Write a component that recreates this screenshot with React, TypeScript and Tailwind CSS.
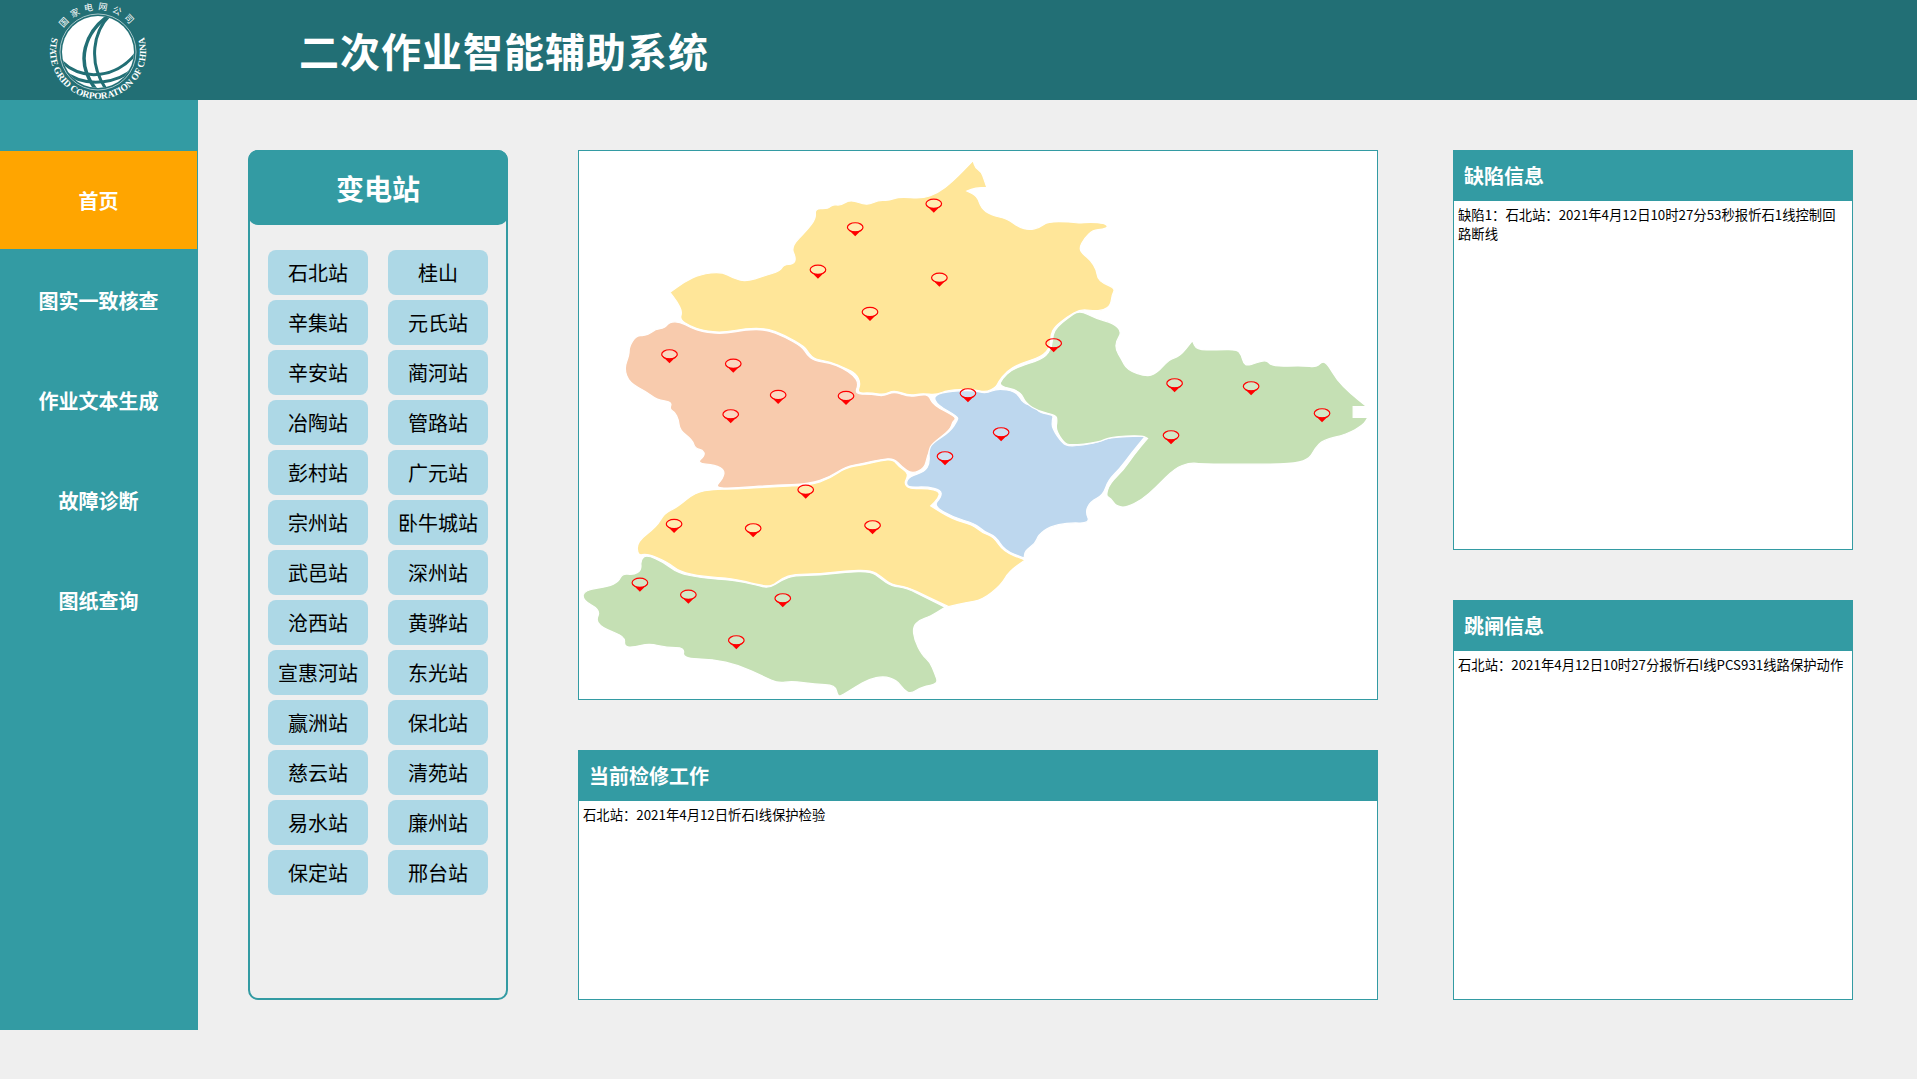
const NAV = ['首页', '图实一致核查', '作业文本生成', '故障诊断', '图纸查询'];

const STATIONS = [
  '石北站', '桂山', '辛集站', '元氏站', '辛安站', '蔺河站', '冶陶站', '管路站', '彭村站', '广元站',
  '宗州站', '卧牛城站', '武邑站', '深州站', '沧西站', '黄骅站', '宣惠河站', '东光站', '赢洲站', '保北站',
  '慈云站', '清苑站', '易水站', '廉州站', '保定站', '邢台站',
];

// Outlines are traced in a stretched trace space: x = (px - 570) * 1.96, y = (py - 140) * 3
// A point listed twice stays a sharp corner
const REGIONS: { fill: string; pts: number[] }[] = [
  {
    fill: '#ffe699',
    pts: [790,62,790,62,795,85,806,95,812,120,817,143,817,143,795,143,778,153,778,153,798,168,806,205,825,225,858,237,880,262,900,270,920,263,936,245,980,245,995,250,1020,246,1048,250,1055,260,1045,268,1025,270,1008,295,998,325,1005,342,1020,360,1032,390,1034,415,1045,430,1069,445,1062,465,1060,495,1045,512,1025,512,1000,508,975,530,950,560,942,585,942,620,925,650,880,672,855,695,840,725,835,742,815,757,790,748,740,750,718,765,690,760,665,767,635,750,615,765,590,758,562,760,570,730,560,700,540,685,510,665,480,658,468,640,460,620,420,585,385,565,345,565,300,578,260,572,235,558,215,538,220,515,210,485,196,457,196,457,225,425,255,403,297,395,320,415,345,425,380,408,412,393,418,375,438,372,443,355,433,320,465,270,482,235,480,205,505,207,515,193,530,197,550,178,582,197,605,180,625,182,645,170,690,176,720,160,750,125],
  },
  {
    fill: '#f8cbad',
    pts: [195,546,215,545,235,562,260,576,300,582,345,569,385,569,420,590,455,620,465,645,478,662,510,669,535,685,555,705,566,730,558,763,590,762,615,769,635,754,665,771,690,764,703,766,712,795,755,830,755,840,750,845,745,870,710,910,700,950,695,985,670,1002,650,980,635,955,610,958,575,970,540,980,510,1010,470,1032,400,1035,320,1045,283,1043,300,1015,303,990,285,975,248,970,265,945,260,930,245,925,240,900,215,870,213,840,205,815,195,808,200,785,170,780,150,755,116,728,106,685,116,645,116,620,130,586,150,588,168,567,185,565],
  },
  {
    fill: '#ffe699',
    pts: [245,1057,283,1047,320,1048,400,1040,470,1036,510,1015,540,983,575,974,610,962,633,958,645,980,660,995,662,1010,655,1030,665,1047,700,1045,725,1055,722,1075,707,1098,707,1098,750,1138,790,1155,810,1180,830,1190,850,1235,892,1260,892,1260,860,1295,845,1335,808,1380,775,1388,742,1400,742,1400,700,1370,660,1340,630,1335,610,1310,590,1290,540,1292,490,1302,440,1302,415,1315,395,1340,370,1335,320,1315,260,1310,215,1295,190,1265,150,1240,133,1248,131,1205,170,1160,185,1120,210,1102],
  },
  {
    fill: '#c5e0b4',
    pts: [150,1244,185,1268,210,1298,260,1315,320,1320,365,1335,390,1345,415,1320,440,1306,490,1306,540,1296,590,1294,608,1315,630,1338,660,1344,700,1375,735,1402,735,1402,705,1430,685,1440,672,1460,675,1500,690,1545,705,1565,715,1600,722,1632,690,1640,668,1662,655,1650,640,1620,615,1608,585,1618,560,1640,535,1665,525,1670,520,1635,480,1633,435,1623,408,1630,380,1610,330,1575,280,1558,220,1555,225,1523,190,1523,155,1510,125,1522,106,1520,108,1490,70,1468,50,1445,60,1410,24,1380,28,1350,75,1340,95,1325,103,1300,125,1305,140,1290,138,1260],
  },
  {
    fill: '#bdd7ee',
    pts: [712,768,735,755,790,750,815,761,838,745,875,755,888,790,912,800,920,818,948,825,945,840,945,865,965,910,980,920,1030,910,1055,892,1128,888,1128,888,1100,940,1078,985,1055,1020,1045,1065,1020,1085,1010,1115,1020,1150,975,1148,940,1160,918,1185,912,1210,892,1232,890,1254,890,1254,852,1232,835,1190,812,1175,793,1150,752,1133,712,1098,728,1070,727,1050,700,1040,665,1042,658,1030,665,1010,695,995,705,970,703,930,710,910,745,875,760,840,760,830,720,795],
  },
  {
    fill: '#c5e0b4',
    pts: [998,510,1030,535,1065,550,1082,575,1070,605,1070,630,1080,655,1092,690,1130,710,1150,700,1175,657,1195,650,1220,602,1220,602,1228,630,1267,630,1307,628,1316,645,1320,670,1329,678,1365,657,1375,680,1437,677,1463,682,1475,663,1486,675,1503,720,1529,760,1562,800,1562,800,1535,800,1535,800,1535,832,1535,832,1564,832,1564,832,1555,855,1522,883,1476,900,1460,925,1450,955,1424,970,1359,973,1241,972,1215,968,1185,985,1150,1040,1120,1080,1090,1103,1070,1098,1060,1075,1050,1068,1058,1030,1085,990,1105,945,1132,895,1132,895,1120,886,1060,890,1035,908,980,916,968,908,952,870,955,840,952,825,920,815,893,790,882,752,840,738,848,715,865,690,890,675,930,655,945,620,946,585,955,560,975,535],
  },
];

// Marker tips, same trace space
const PINS = [
  713,216, 559,287, 486,414, 724,438, 588,541, 948,635, 195,668, 320,696, 408,790, 541,793, 780,785,
  315,848, 1185,755, 1335,764, 1474,845, 845,902, 735,974, 1178,911, 462,1074, 204,1177, 359,1190,
  593,1181, 137,1353, 232,1389, 417,1400, 326,1526,
];

// Runs a closed, softly rounded path through the traced points
function outline(pts: number[]) {
  const n = pts.length / 2;
  const mid = (i: number) => {
    const a = i % n;
    const b = (i + 1) % n;
    return `${(pts[a * 2] + pts[b * 2]) / 2} ${(pts[a * 2 + 1] + pts[b * 2 + 1]) / 2}`;
  };
  let d = `M${mid(n - 1)}`;
  for (let i = 0; i < n; i++) d += ` Q${pts[i * 2]} ${pts[i * 2 + 1]} ${mid(i)}`;
  return d + ' Z';
}

function MapView() {
  const pins = [];
  for (let i = 0; i < PINS.length; i += 2) {
    pins.push({ x: PINS[i] / 1.96 - 9, y: PINS[i + 1] / 3 - 10.3 });
  }
  return (
    <svg width="798" height="548" viewBox="0 0 798 548" className="block">
      <g transform="translate(-9 -11) scale(0.5102 0.33333)">
        {REGIONS.map((r, i) => (
          <path key={i} d={outline(r.pts)} fill={r.fill} stroke="#ffffff" strokeWidth="1.2" vectorEffect="non-scaling-stroke" />
        ))}
      </g>
      {pins.map((p, i) => (
        <g key={i} transform={`translate(${p.x} ${p.y})`}>
          <path d="M-5.8 -5.8 Q0 -3.8 5.8 -5.8 L0 0 Z" fill="#ff0000" />
          <path d="M-7.4 -7.8 L-5 -5.2 M7.4 -7.8 L5 -5.2" fill="none" stroke="#ff0000" strokeWidth="1" />
          <ellipse cx="0" cy="-9" rx="7.8" ry="4.6" fill="#ffffff" fillOpacity="0.25" stroke="#ff0000" strokeWidth="1.2" />
        </g>
      ))}
    </svg>
  );
}

function Logo() {
  return (
    <svg width="100" height="100" viewBox="0 0 100 100" className="shrink-0">
      <defs>
        <path id="logo-cn" d="M 10 39 A 42 42 0 0 1 90 39" />
        <path id="logo-en" d="M 7.6 28.5 A 48 48 0 1 0 92.4 28.5" />
        <clipPath id="logo-globe">
          <circle cx="50" cy="52" r="36" />
        </clipPath>
      </defs>
      <circle cx="50" cy="52" r="36" fill="#ffffff" />
      <g clipPath="url(#logo-globe)" fill="none" stroke="#226f75">
        <path d="M63 14 C38 30 24 62 50 92" strokeWidth="3.5" />
        <path d="M63 14 C46 30 38 62 60 92" strokeWidth="3" />
        <path d="M12 60 C34 82 70 80 92 48" strokeWidth="3" />
        <path d="M14 70 C38 90 74 84 92 62" strokeWidth="3" />
      </g>
      <circle cx="50" cy="52" r="38" fill="none" stroke="#ffffff" strokeWidth="0.6" />
      <text fill="#ffffff" fontSize="9" className="font-['Noto_Sans_CJK_SC',sans-serif]">
        <textPath href="#logo-cn" startOffset="50%" textAnchor="middle" letterSpacing="4.5">国家电网公司</textPath>
      </text>
      <text fill="#ffffff" fontSize="9.4" fontWeight="700" className="font-['Liberation_Serif',serif]">
        <textPath href="#logo-en" startOffset="50%" textAnchor="middle">STATE GRID CORPORATION OF CHINA</textPath>
      </text>
    </svg>
  );
}

function InfoPanel({ title, height, children }: { title: string; height: string; children: string }) {
  return (
    <section className={`flex flex-col border border-[#339ba3] bg-white ${height}`}>
      <h2 className="flex h-[50px] shrink-0 items-center bg-[#339ba3] pl-[10px] text-[20px] font-bold text-white">{title}</h2>
      <p className="px-[4px] pt-[4px] text-[13.33px] leading-[19px] text-black">{children}</p>
    </section>
  );
}

export default function App() {
  return (
    <div className="h-[1079px] overflow-hidden bg-[#efefef] font-['Noto_Sans_CJK_SC',sans-serif]">
      <header className="flex h-[100px] items-center bg-[#226f75] pl-[48px]">
        <Logo />
        <h1 className="ml-[151px] text-[40px] font-bold tracking-[1px] text-white">二次作业智能辅助系统</h1>
      </header>

      <div className="flex">
        <nav className="h-[930px] w-[198px] shrink-0 bg-[#339ba3] pt-[51px]">
          {NAV.map((item, i) => (
            <div
              key={item}
              className={`mb-[2px] flex h-[98px] w-[197px] items-center justify-center pt-[2px] text-[20px] font-bold text-white ${i === 0 ? 'bg-[#ffa500]' : ''}`}
            >
              {item}
            </div>
          ))}
        </nav>

        <main className="flex gap-[70px] pl-[50px] pt-[50px]">
          <section className="h-[850px] w-[260px] shrink-0 rounded-[10px] border-2 border-[#339ba3]">
            <h2 className="-mx-[2px] -mt-[2px] flex h-[75px] items-center justify-center rounded-[10px] bg-[#339ba3] text-[28px] font-bold text-white">
              变电站
            </h2>
            <div className="grid grid-cols-2 gap-x-[20px] gap-y-[5px] px-[18px] pt-[25px]">
              {STATIONS.map((s) => (
                <div key={s} className="flex h-[45px] items-center justify-center rounded-[8px] bg-[#add8e6] text-[20px] text-black">
                  {s}
                </div>
              ))}
            </div>
          </section>

          <div className="flex w-[800px] shrink-0 flex-col gap-[50px]">
            <div className="h-[550px] border border-[#339ba3] bg-white">
              <MapView />
            </div>
            <InfoPanel title="当前检修工作" height="h-[250px]">石北站：2021年4月12日忻石I线保护检验</InfoPanel>
          </div>

          <div className="ml-[5px] flex w-[400px] shrink-0 flex-col gap-[50px]">
            <InfoPanel title="缺陷信息" height="h-[400px]">缺陷1：石北站：2021年4月12日10时27分53秒报忻石1线控制回路断线</InfoPanel>
            <InfoPanel title="跳闸信息" height="h-[400px]">石北站：2021年4月12日10时27分报忻石I线PCS931线路保护动作</InfoPanel>
          </div>
        </main>
      </div>
    </div>
  );
}
